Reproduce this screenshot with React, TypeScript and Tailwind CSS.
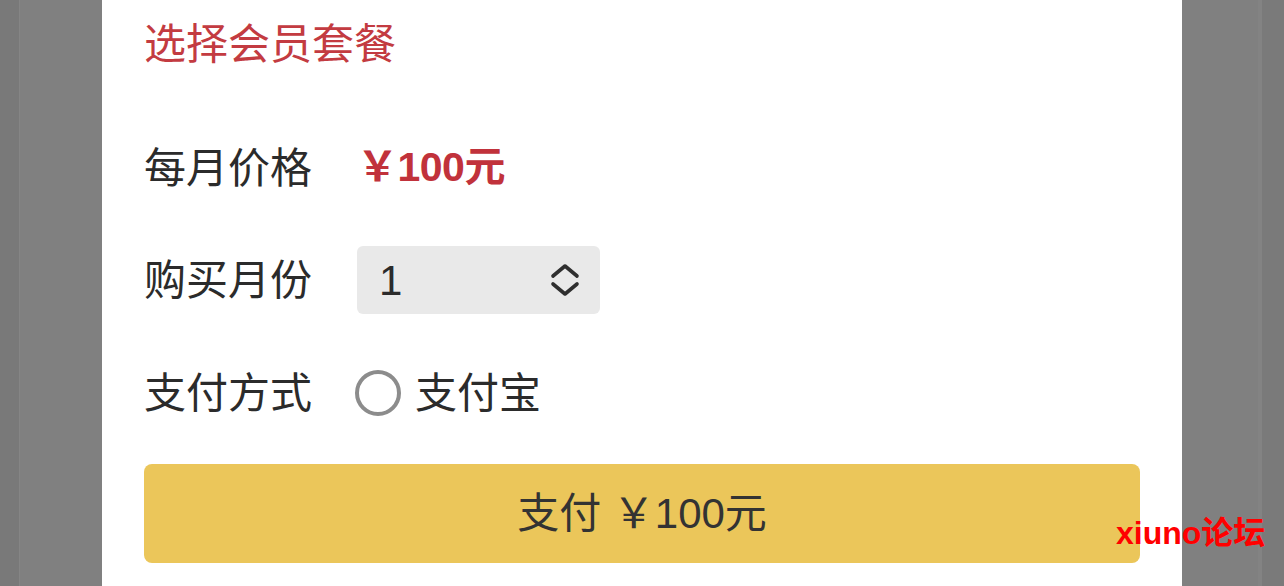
import React from 'react'

// 会员套餐购买弹层
const font = { fontFamily: '"Liberation Sans", "Noto Sans CJK SC", sans-serif' }

function Chevrons() {
  return (
    <svg width="30" height="34" viewBox="0 0 30 34" fill="none" stroke="#2f2f2f" strokeWidth="3.6" strokeLinecap="round" strokeLinejoin="round">
      <path d="M3 13 L15 3 L27 13" />
      <path d="M3 21 L15 31 L27 21" />
    </svg>
  )
}

export default function App() {
  return (
    <div className="relative flex h-[586px] w-[1284px] overflow-hidden bg-[#808080]" style={font}>
      <div className="w-[20px] shrink-0 bg-[#797979] border-r border-[#858585]" />
      <div className="w-[82px] shrink-0" />

      {/* panel */}
      <div className="w-[1080px] shrink-0 bg-white px-[42px] text-[42px] text-[#2b2b2b]">
        <div className="flex h-[88px] items-center text-[#c33b41]">选择会员套餐</div>

        <div className="mt-[24px] flex h-[112px] items-center">
          <span className="w-[213px] shrink-0">每月价格</span>
          <span className="text-[41px] font-bold tracking-[-0.5px] text-[#c1323b]">￥100元</span>
        </div>

        <div className="flex h-[112px] items-center">
          <span className="w-[213px] shrink-0">购买月份</span>
          <div className="flex h-[68px] w-[243px] items-center justify-between rounded-md bg-[#e9e9e9] pl-[22px] pr-[20px]">
            <span>1</span>
            <Chevrons />
          </div>
        </div>

        <div className="flex h-[114px] items-center">
          <span className="w-[211px] shrink-0">支付方式</span>
          <span className="h-[46px] w-[46px] rounded-full border-[4px] border-[#8c8c8c]" />
          <span className="ml-[14px]">支付宝</span>
        </div>

        <div className="mt-[14px] flex h-[99px] items-center justify-center rounded-lg bg-[#ebc65a] text-[#333]">
          支付 ￥100元
        </div>
      </div>

      <div className="w-[80px] shrink-0 border-r-[4px] border-[#838383]" />
      <div className="flex-1 bg-[#7a7a7a]" />

      {/* watermark */}
      <div className="absolute left-[1116px] top-[517px] text-[32px] font-bold leading-none text-[#ff0000]">xiuno论坛</div>
    </div>
  )
}
